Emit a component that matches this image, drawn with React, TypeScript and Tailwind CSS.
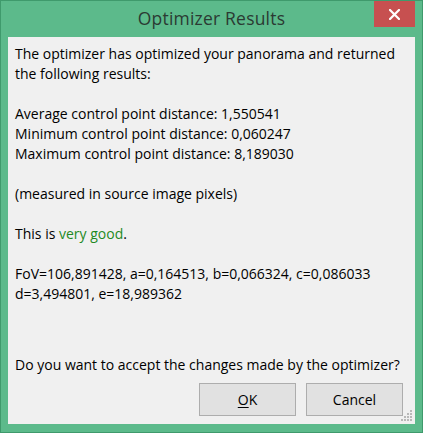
import React from 'react';

const font = { fontFamily: '"Open Sans", "Noto Sans", sans-serif' };

function CloseIcon() {
  return (
    <svg width="11" height="11" viewBox="0 0 11 11" className="block">
      <path d="M1 1L10 10M10 1L1 10" stroke="#ffffff" strokeWidth={2.2} strokeLinecap="square" />
    </svg>
  );
}

function Grip() {
  return (
    <svg width="12" height="12" viewBox="0 0 12 12" className="absolute right-[2px] bottom-[2px]">
      <rect x="9" y="0" width="2" height="2" fill="#b8b8b8" />
      <rect x="6" y="3" width="2" height="2" fill="#b8b8b8" />
      <rect x="9" y="3" width="2" height="2" fill="#b8b8b8" />
      <rect x="3" y="6" width="2" height="2" fill="#b8b8b8" />
      <rect x="6" y="6" width="2" height="2" fill="#b8b8b8" />
      <rect x="9" y="6" width="2" height="2" fill="#b8b8b8" />
      <rect x="0" y="9" width="2" height="2" fill="#b8b8b8" />
      <rect x="3" y="9" width="2" height="2" fill="#b8b8b8" />
      <rect x="6" y="9" width="2" height="2" fill="#b8b8b8" />
      <rect x="9" y="9" width="2" height="2" fill="#b8b8b8" />
    </svg>
  );
}

export default function App() {
  const lines = [
    'The optimizer has optimized your panorama and returned',
    'the following results:',
    '',
    'Average control point distance: 1,550541',
    'Minimum control point distance: 0,060247',
    'Maximum control point distance: 8,189030',
    '',
    '(measured in source image pixels)',
    '',
  ];

  return (
    <div
      className="w-[423px] h-[433px] bg-[#5cba8b] border border-[#3f9a6c] flex flex-col"
      style={font}
    >
      {/* Title bar */}
      <div className="relative h-[36px] flex items-center justify-center shrink-0">
        <span className="text-[17.5px] text-[#2b3a33] tracking-[0.2px] -mt-[1px]">Optimizer Results</span>
        <button className="absolute right-[7px] top-0 w-[41px] h-[26px] bg-[#c75050] flex items-center justify-center">
          <CloseIcon />
        </button>
      </div>

      {/* Client area */}
      <div className="relative flex-1 mx-[7px] mb-[8px] bg-[#f0f0f0] flex flex-col pl-[7px] pt-[7px] text-[14px] leading-[20px] text-[#000000]">
        {lines.map((l, i) => (
          <div key={i} className="h-[20px] whitespace-nowrap">{l}</div>
        ))}
        <div className="h-[20px] whitespace-nowrap">
          This is <span className="text-[#1f8a1f]">very good</span>.
        </div>
        <div className="h-[20px]" />
        <div className="h-[20px] whitespace-nowrap">FoV=106,891428, a=0,164513, b=0,066324, c=0,086033</div>
        <div className="h-[20px] whitespace-nowrap">d=3,494801, e=18,989362</div>

        <div className="flex-1" />
        <div className="h-[20px] whitespace-nowrap">Do you want to accept the changes made by the optimizer?</div>

        <div className="flex justify-end gap-[10px] pr-[12px] pt-[8px] pb-[8px]">
          <button className="w-[97px] h-[33px] bg-[#e1e1e1] border border-[#adadad] text-[14px]">
            <span className="underline underline-offset-2">O</span>K
          </button>
          <button className="w-[97px] h-[33px] bg-[#e1e1e1] border border-[#adadad] text-[14px]">
            Cancel
          </button>
        </div>
        <Grip />
      </div>
    </div>
  );
}
